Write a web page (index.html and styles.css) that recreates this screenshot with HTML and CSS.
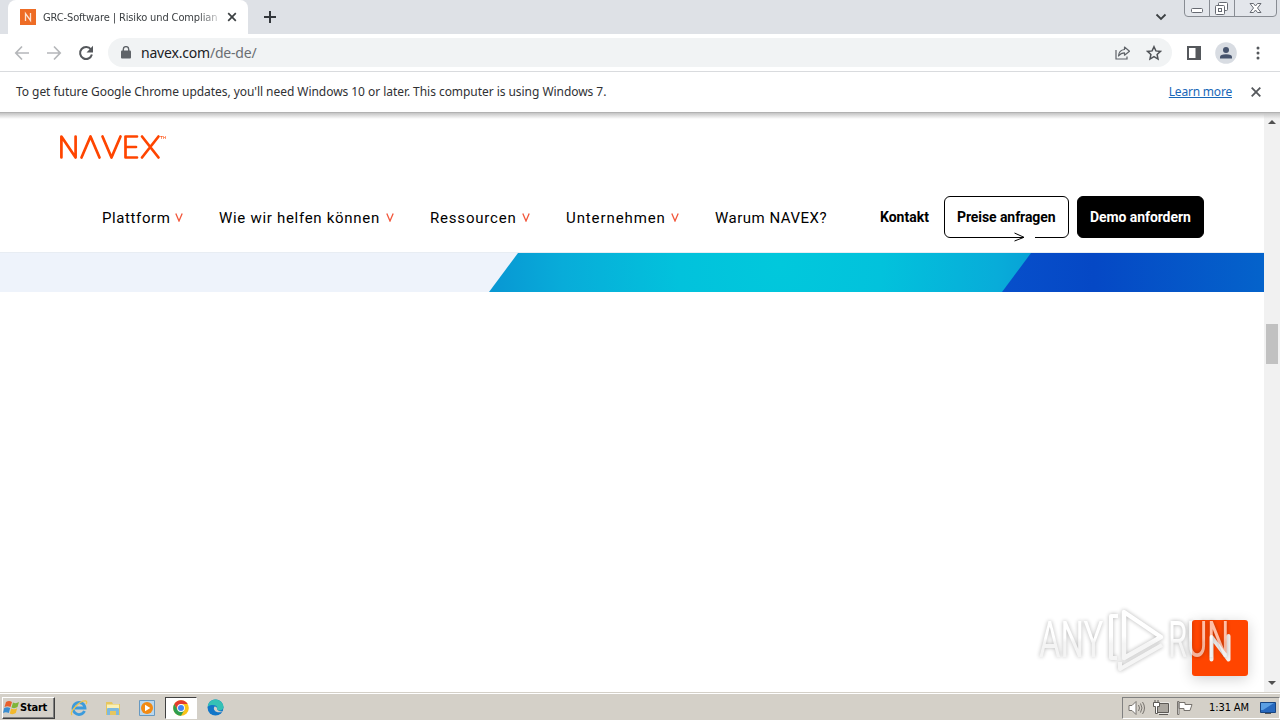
FILE: index.html
```html
<!DOCTYPE html>
<html lang="de">
<head>
    <meta charset="utf-8">
    <title>GRC-Software | Risiko und Compliance</title>
    <link rel="stylesheet" href="styles.css">
</head>
<body>
    <div class="tabstrip">
        <div class="tab">
            <svg class="favicon" width="16" height="16" viewBox="0 0 16 16"><rect width="16" height="16" fill="#ee6c25"/><path d="M5.500 12V4.500l5 7V4" fill="none" stroke="#fbe3d3" stroke-width="1.300"/></svg>
            <span class="tab-title">GRC-Software | Risiko und Complian</span>
            <svg class="tab-close" width="10" height="10" viewBox="0 0 10 10"><path d="M1.200 1.200l7.600 7.600M8.800 1.200L1.200 8.800" stroke="#3c4043" stroke-width="1.700"/></svg>
        </div>
        <svg class="new-tab" width="14" height="14" viewBox="0 0 14 14"><path d="M7 1v12M1 7h12" stroke="#33373c" stroke-width="2"/></svg>
        <svg class="tab-search" width="12" height="8" viewBox="0 0 12 8"><path d="M1.500 1.500L6 6l4.500-4.500" fill="none" stroke="#3c4043" stroke-width="1.800"/></svg>
        <svg class="window-buttons" width="94" height="18" viewBox="0 0 94 18">
            <path d="M.5 0v13q0 3.500 3.500 3.500h85q3.500 0 3.500-3.500V0M25.500 0v16M50.500 0v16" fill="#e3e6eb" stroke="#888c93"/>
            <g fill="#fff" stroke="#666a72">
                <rect x="7.500" y="8.500" width="11" height="4" rx="1"/>
                <rect x="34.500" y="2.500" width="9" height="8" rx="1"/>
                <rect x="31.500" y="5.500" width="9" height="9" rx="1"/>
                <rect x="34.500" y="8.500" width="3" height="3"/>
                <path d="M66 3.500h3.500l2 2.500 2-2.500H77L73.500 8l3.500 4.500h-3.500l-2-2.500-2 2.500H66L69.500 8z"/>
            </g>
        </svg>
    </div>

    <div class="toolbar">
        <svg class="tool" width="16" height="16" viewBox="0 0 16 16"><path d="M15 8H2M8 1.500L1.800 8 8 14.500" fill="none" stroke="#b5b7ba" stroke-width="1.700"/></svg>
        <svg class="tool" width="16" height="16" viewBox="0 0 16 16"><path d="M1 8h13M8 1.500L14.200 8 8 14.500" fill="none" stroke="#b5b7ba" stroke-width="1.700"/></svg>
        <svg class="tool" width="16" height="16" viewBox="0 0 16 16"><path d="M13 4.500A6 6 0 1 0 13.900 9.500" fill="none" stroke="#55585c" stroke-width="2"/><path d="M15 .8v6.700H8.500z" fill="#55585c"/></svg>
        <div class="omnibox">
            <svg width="10" height="13" viewBox="0 0 10 13"><rect y="4.500" width="10" height="8" rx="1" fill="#5f6368"/><path d="M2.300 5V3.300a2.700 2.700 0 0 1 5.400 0V5" fill="none" stroke="#5f6368" stroke-width="1.400"/></svg>
            <span class="url">navex.com<span class="path">/de-de/</span></span>
            <svg class="share" width="15" height="14" viewBox="0 0 15 14" fill="none" stroke="#5f6368" stroke-width="1.200"><path d="M1 4v9h11v-2.500"/><path d="M9.500 1l5 4.200-5 4V6.800Q6 6.800 3.500 10q.5-6 6-6.500z" stroke-linejoin="round"/></svg>
            <svg class="star" width="16" height="16" viewBox="0 0 16 16"><path d="M8 1.700l1.900 4.200 4.600.5-3.400 3.100.9 4.600-4-2.400-4 2.400.9-4.600L1.500 6.400l4.600-.5z" fill="none" stroke="#505357" stroke-width="1.500"/></svg>
        </div>
        <svg class="panel" width="14" height="14" viewBox="0 0 14 14"><rect x="1" y="1" width="12" height="12" fill="none" stroke="#55585c" stroke-width="2"/><rect x="8.500" y="1" width="5" height="12" fill="#55585c"/></svg>
        <svg class="avatar" width="22" height="22" viewBox="0 0 22 22"><circle cx="11" cy="11" r="10.800" fill="#d8dce2"/><circle cx="11" cy="8" r="3" fill="#47546d"/><path d="M5 16.500V15q0-2.800 6-2.800t6 2.800v1.500z" fill="#47546d"/></svg>
        <svg class="more" width="4" height="14" viewBox="0 0 4 14" fill="#55585c"><circle cx="2" cy="2" r="1.500"/><circle cx="2" cy="7" r="1.500"/><circle cx="2" cy="12" r="1.500"/></svg>
    </div>

    <div class="infobar">
        <span class="info-text">To get future Google Chrome updates, you'll need Windows 10 or later. This computer is using Windows 7.</span>
        <a class="learn" href="#">Learn more</a>
        <svg width="10" height="10" viewBox="0 0 10 10"><path d="M.7.700l8.600 8.600M9.300.700L.7 9.300" stroke="#55585c" stroke-width="1.800"/></svg>
    </div>

    <div class="viewport">
        <div class="page">
            <header class="site-header">
                <svg class="logo" width="108" height="26" viewBox="0 0 108 26" fill="none" stroke="#ff4500" stroke-width="2.700" stroke-linecap="round" stroke-linejoin="round">
                    <path d="M2.400 23.500V2.500l14.200 21v-21M22.500 23.500L31.500 2.500l9 21M43.500 2.500l9 21 9-21"/>
                    <path d="M78 2.500H66.500v21H78M66.500 13H77"/>
                    <path d="M83 2.500l16.500 21M99.500 2.500L83 23.500"/>
                    <path d="M101.500 2.500h2M102.500 2.500v2M104.500 4.500v-2l1 1 1-1v2" stroke-width=".6"/>
                </svg>
                <nav class="menu">
                    <a class="item plattform">Plattform <svg class="chev" viewBox="0 0 8 9"><path d="M.8.500L4 8 7.200.500"/></svg></a>
                    <a class="item helfen">Wie wir helfen können <svg class="chev" viewBox="0 0 8 9"><path d="M.8.500L4 8 7.200.500"/></svg></a>
                    <a class="item ressourcen">Ressourcen <svg class="chev" viewBox="0 0 8 9"><path d="M.8.500L4 8 7.200.500"/></svg></a>
                    <a class="item unternehmen">Unternehmen <svg class="chev" viewBox="0 0 8 9"><path d="M.8.500L4 8 7.200.500"/></svg></a>
                    <a class="item warum">Warum NAVEX?</a>
                    <a class="contact">Kontakt</a>
                    <a class="btn outline">Preise anfragen
                        <svg class="arrow" width="22" height="10" viewBox="0 0 22 10"><path d="M11 0h11v10H11z" fill="#fff"/><path d="M0 5.500h10" stroke="#000"/><path d="M1.500 1L11 5.300 1.500 9" fill="none" stroke="#000"/></svg>
                    </a>
                    <a class="btn solid">Demo anfordern</a>
                </nav>
            </header>
            <svg class="banner" width="1264" height="39" viewBox="0 0 1264 39">
                <defs>
                    <radialGradient id="cyan" gradientUnits="userSpaceOnUse" cx="780" cy="12" r="290">
                        <stop offset="0" stop-color="#01c8dc"/>
                        <stop offset=".35" stop-color="#02c2dc"/>
                        <stop offset=".75" stop-color="#08acd9"/>
                        <stop offset="1" stop-color="#0897d3"/>
                    </radialGradient>
                    <linearGradient id="blue" x1="0" x2="1">
                        <stop offset="0" stop-color="#074fcb"/>
                        <stop offset=".35" stop-color="#0548c5"/>
                        <stop offset="1" stop-color="#0463cb"/>
                    </linearGradient>
                </defs>
                <rect width="1264" height="39" fill="#eef3fb"/>
                <path d="M518 0h520v39H489z" fill="url(#cyan)"/>
                <path d="M1031 0h233v39h-262z" fill="url(#blue)"/>
            </svg>
            <div class="chat">
                <svg width="56" height="56" viewBox="0 0 56 56"><path d="M19.500 39.500V17l17 22.500V16" fill="none" stroke="#f4f1ef" stroke-width="4" stroke-linecap="round" stroke-linejoin="round"/></svg>
            </div>
            <div class="watermark">
                <span class="wm-text any">ANY</span>
                <svg class="wm-mark" width="58" height="64" viewBox="0 0 58 64" fill="none" stroke-linejoin="round">
                    <defs>
                        <linearGradient id="fade" gradientUnits="userSpaceOnUse" x1="0" y1="28" x2="0" y2="36">
                            <stop offset="0" stop-color="#fff"/>
                            <stop offset="1" stop-color="#f0f0f0"/>
                        </linearGradient>
                    </defs>
                    <path d="M17 4v46l37-21z" stroke="url(#fade)" stroke-width="4.500"/>
                    <path d="M11 8H4v42h6M13 54v7l42-24" stroke="url(#fade)" stroke-width="4"/>
                </svg>
                <span class="wm-text run">RUN</span>
            </div>
        </div>
        <div class="scrollbar">
            <svg width="8" height="4" viewBox="0 0 8 4"><path d="M0 4l4-4 4 4z" fill="#505050"/></svg>
            <div class="thumb"></div>
            <svg class="down" width="8" height="4" viewBox="0 0 8 4"><path d="M0 0l4 4 4-4z" fill="#505050"/></svg>
        </div>
    </div>

    <div class="taskbar">
        <div class="start">
            <svg width="17" height="16" viewBox="0 0 17 16">
                <path d="M3 2q3-2 6 0L7.500 7Q4.500 5.500 1.500 7z" fill="#e8602c"/>
                <path d="M10 2.500q3 1.500 6-.5L14.500 7q-3 2-6 .5z" fill="#7fb539"/>
                <path d="M1.200 8q3-1.500 6 0L5.800 13q-3-1.500-5.800 0z" fill="#3a8dd0"/>
                <path d="M8.200 8.500q3 1.500 6-.3L12.800 13q-3 2-6 .5z" fill="#f3b92c"/>
            </svg>
            <span>Start</span>
        </div>
        <div class="quick">
            <svg width="18" height="18" viewBox="0 0 18 18" fill="none"><path d="M14.500 12A6 6 0 1 1 15 9H5" stroke="#3c9bdc" stroke-width="2.800"/><path d="M2 16C-1 13 10 1 16 2q1.500 1 0 3" stroke="#efc44b" stroke-width="1.300"/></svg>
        </div>
        <div class="quick">
            <svg width="18" height="18" viewBox="0 0 18 18"><path d="M2 3h6l1 2h7v11H2z" fill="#e6c65f"/><path d="M3 5.500h12V12H3z" fill="#faf0b5"/><path d="M3 16v-6q0-1 1-1h10q1 0 1 1v6h-3v-4H6v4z" fill="#7db9df"/></svg>
        </div>
        <div class="quick">
            <svg width="18" height="18" viewBox="0 0 18 18"><path d="M1.500 1.500h15v15h-15z" fill="#b9d7ee" stroke="#6799c1"/><circle cx="9" cy="9" r="6" fill="#f28a13"/><path d="M7 5.700v6.600L12.300 9z" fill="#fff"/></svg>
        </div>
        <div class="quick active">
            <svg width="16" height="16" viewBox="0 0 16 16"><circle cx="8" cy="8" r="7.800" fill="#f9c318"/><path d="M1.250 4.100A7.800 7.800 0 0 1 14.750 4.100H8L4.700 10z" fill="#e33b2e"/><path d="M1.250 4.100A7.800 7.800 0 0 0 8 15.800L11.400 10H4.600z" fill="#2f9e4f"/><circle cx="8" cy="8" r="3.900" fill="#fff"/><circle cx="8" cy="8" r="3" fill="#4285f4"/></svg>
        </div>
        <div class="quick">
            <svg width="17" height="17" viewBox="0 0 17 17"><circle cx="8.500" cy="8.500" r="8" fill="#1276c8"/><path d="M.8 7.500C2-2 15-1.500 16.500 7.500c.5 4-4.500 5-6.500 3 1.500-4-4-6-9.200-3z" fill="#35c1b5"/><path d="M7.500 7.500c-2 3 1 7 7.500 5.500l1.500-1c-1.500 1-5 .5-6.500-1.500.8-1.500-.7-3-2.500-3z" fill="#d4d0c8"/></svg>
        </div>
        <div class="tray">
            <svg width="17" height="16" viewBox="0 0 17 16" fill="none" stroke="#77736e"><path d="M1 5.500h3l4-4v13l-4-4H1z" fill="#fff"/><path d="M10.500 5q2 3 0 6M12.500 3.500q3 4.500 0 9M14.500 2q4 6 0 12"/></svg>
            <svg width="17" height="16" viewBox="0 0 17 16" stroke="#5d5a56"><path d="M4.500 3.500h11v9h-11z" fill="#aaa69f" stroke="#fff" stroke-width="2"/><path d="M4.500 3.500h11v9h-11zM6 14.500h9" fill="#aaa69f"/><path d="M.5 2.500h6v4h-2v7h-2v-7h-2zM2 2.500V0M5 2.500V0" fill="#fff"/></svg>
            <svg class="flag" width="17" height="16" viewBox="0 0 17 16" stroke="#77736e"><path d="M.5 1.500H2v13H.5zM2 2.500h6v2h7l-2 6H7v-2H2z" fill="#fff"/></svg>
            <span class="clock">1:31 AM</span>
            <svg class="desktop" width="16" height="14" viewBox="0 0 16 14"><path d="M.5 1.500h15v10H.5z" fill="#2869be" stroke="#174582"/><path d="M1 2h13L3 9H1z" fill="#5b9fe3"/><path d="M5 12.500h6" stroke="#555"/></svg>
        </div>
    </div>
</body>
</html>
```
FILE: styles.css
```css
* {
    box-sizing: border-box;
}

body {
    margin: 0;
    width: 1280px;
    height: 720px;
    overflow: hidden;
    display: flex;
    flex-direction: column;
    background: #fff;
    font-family: "Noto Sans", "Open Sans", sans-serif;
}

svg {
    display: block;
    flex: none;
}

/* Browser */
.tabstrip {
    height: 34px;
    flex: none;
    display: flex;
    align-items: flex-start;
    background: #dee1e6;
}

.tab {
    width: 240px;
    height: 34px;
    margin-left: 8px;
    padding: 0 11px 0 12px;
    display: flex;
    align-items: center;
    background: #fff;
    border-radius: 8px 8px 0 0;
}

.tab-title {
    width: 180px;
    margin-left: 7px;
    white-space: nowrap;
    font-family: "DejaVu Sans Condensed", "DejaVu Sans", sans-serif;
    font-size: 11px;
    letter-spacing: -0.12px;
    color: #3c4043;
    -webkit-mask-image: linear-gradient(to right, #000 155px, rgba(0, 0, 0, 0.15) 178px);
}

.tab-close {
    margin-left: auto;
}

.new-tab {
    margin: 10px 0 0 15px;
}

.tab-search {
    margin: 13px 17px 0 auto;
}

.window-buttons {
    margin-right: 2px;
}

.toolbar {
    height: 38px;
    flex: none;
    display: flex;
    align-items: center;
    padding: 0 20px 0 14px;
    border-bottom: 1px solid #d9dbde;
}

.tool {
    margin-right: 16px;
}

.omnibox {
    flex: 1;
    height: 29px;
    margin-left: -2px;
    padding: 0 10px 0 13px;
    display: flex;
    align-items: center;
    border-radius: 15px;
    background: #f1f3f4;
}

.url {
    flex: 1;
    margin-left: 10px;
    font-size: 14px;
    letter-spacing: -0.2px;
    color: #202124;
}

.path {
    color: #6a6e73;
}

.star {
    margin-left: 16px;
}

.panel {
    margin-left: 15px;
}

.avatar {
    margin-left: 14px;
}

.more {
    margin-left: 19px;
}

.infobar {
    height: 41px;
    flex: none;
    display: flex;
    align-items: center;
    padding: 0 19px 0 16px;
    border-bottom: 1px solid #b2b2b2;
    font-size: 12px;
    letter-spacing: -0.05px;
    color: #303134;
}

.info-text {
    margin-bottom: 2px;
}

.learn {
    margin: 0 19px 2px auto;
    letter-spacing: -0.2px;
    color: #1967b8;
}

/* Site */
.viewport {
    flex: 1;
    display: flex;
    background: linear-gradient(#c4c4c4, #fff 6px);
}

.page {
    flex: 1;
    position: relative;
}

.site-header {
    height: 140px;
    padding: 21px 60px 0 59px;
    border-bottom: 1px solid #e8edf3;
}

.menu {
    display: flex;
    align-items: center;
    height: 42px;
    margin: 36px 0 0 43px;
    font-family: Roboto, sans-serif;
    font-size: 15px;
    white-space: nowrap;
    color: #000;
}

.item {
    padding-top: 1px;
    display: flex;
    justify-content: space-between;
    align-items: center;
    letter-spacing: 0.7px;
}

.chev {
    width: 8px;
    height: 9px;
    fill: none;
    stroke: #f2573b;
    stroke-width: 1.3;
}

.plattform {
    width: 81px;
    letter-spacing: 0.6px;
}

.helfen {
    width: 175px;
    margin-left: 36px;
}

.ressourcen {
    width: 100px;
    margin-left: 36px;
    letter-spacing: 0.8px;
}

.unternehmen {
    width: 113px;
    margin-left: 36px;
    letter-spacing: 0.9px;
}

.warum {
    width: 112px;
    margin-left: 36px;
    letter-spacing: 0.5px;
}

.contact {
    width: 49px;
    margin: 0 15px 0 53px;
    font-size: 14px;
    font-weight: 700;
}

.btn {
    position: relative;
    height: 42px;
    padding: 0 12px;
    display: flex;
    align-items: center;
    border: 1px solid #000;
    border-radius: 6px;
    font-size: 14px;
    font-weight: 700;
    letter-spacing: -0.08px;
}

.outline {
    width: 125px;
}

.solid {
    width: 127px;
    margin-left: 8px;
    background: #000;
    color: #fff;
}

.arrow {
    position: absolute;
    right: 33px;
    bottom: -5px;
}

.banner {
    width: 1264px;
}

.chat {
    position: absolute;
    right: 16px;
    bottom: 16px;
    width: 56px;
    height: 56px;
    border-radius: 3px;
    background: #ff4500;
    box-shadow: 0 3px 14px rgba(0, 0, 0, 0.18);
}

.watermark {
    position: absolute;
    left: 1039px;
    bottom: 20px;
    display: flex;
    align-items: center;
    opacity: 0.65;
    filter: drop-shadow(0 0 2px rgba(0, 0, 0, 0.45));
}

.wm-text {
    width: 62px;
    font-family: Roboto, sans-serif;
    font-size: 50px;
    line-height: 60px;
    color: transparent;
    background: linear-gradient(#fff 46%, #efefef 54%);
    -webkit-background-clip: text;
    background-clip: text;
    transform-origin: left center;
}

.any {
    width: 103px;
    margin-right: -35px;
    transform: scaleX(0.66);
}

.run {
    width: 105px;
    margin: 0 -43px 0 3px;
    transform: scaleX(0.62);
}

.scrollbar {
    width: 16px;
    padding-top: 7px;
    display: flex;
    flex-direction: column;
    align-items: center;
    background: linear-gradient(#c4c4c4, #f1f1f1 6px);
}

.thumb {
    width: 12px;
    height: 40px;
    margin-top: 200px;
    background: #c1c1c1;
}

.down {
    margin: auto 0 7px;
}

/* Desktop */
.taskbar {
    height: 28px;
    flex: none;
    display: flex;
    align-items: center;
    padding: 2px 0 0 2px;
    border-top: 1px solid #d4d0c8;
    box-shadow: inset 0 1px #fff;
    background: #d4d0c8;
    color: #000;
}

.start {
    width: 53px;
    height: 22px;
    margin-right: 8px;
    display: flex;
    align-items: center;
    border: 1px solid;
    border-color: #fff #404040 #404040 #fff;
    box-shadow: inset -1px -1px #808080;
    font-family: "DejaVu Sans Condensed", "DejaVu Sans", sans-serif;
    font-size: 11px;
    font-weight: 700;
    letter-spacing: -0.2px;
}

.quick {
    width: 32px;
    height: 22px;
    margin-right: 2px;
    display: flex;
    align-items: center;
    justify-content: center;
}

.active {
    background: #fff;
    border: 1px solid;
    border-color: #404040 #fff #fff #404040;
}

.tray {
    width: 158px;
    height: 22px;
    margin-left: auto;
    padding: 0 3px 0 5px;
    display: flex;
    align-items: center;
    border: 1px solid;
    border-color: #808080 #fff #fff #808080;
}

.tray svg + svg {
    margin-left: 8px;
}

.tray .flag {
    margin-left: 7px;
}

.clock {
    margin-left: 15px;
    font-family: "DejaVu Sans Condensed", "DejaVu Sans", sans-serif;
    font-size: 11px;
    letter-spacing: -0.1px;
    white-space: nowrap;
}

.desktop {
    margin-left: auto;
}
```
